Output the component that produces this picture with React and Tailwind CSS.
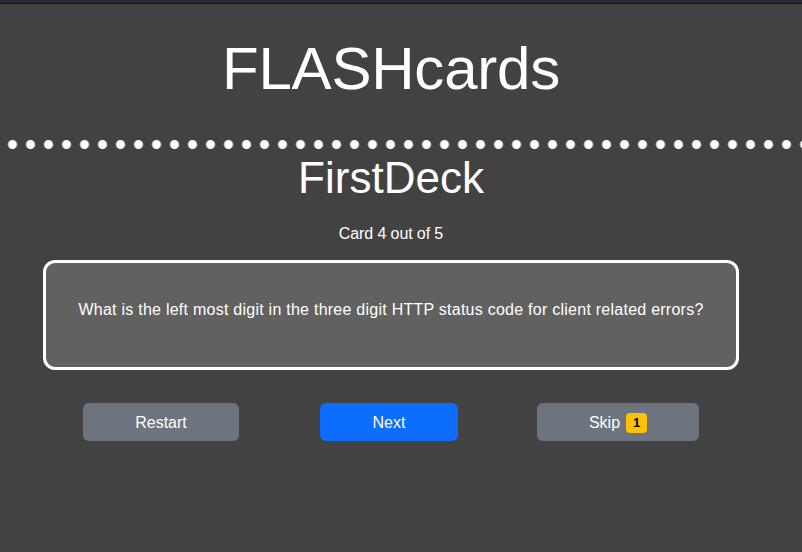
export default function App() {
  return (
    <div className="min-h-[552px] w-full overflow-hidden bg-[#424242] text-white font-['Liberation_Sans',Arial,sans-serif]">
      <div className="h-[3px] bg-[#2c2b34]" />
      <div className="h-px bg-[#111111]" />
      <div className="mx-0 mt-[35px] w-[696px] ml-[43px] text-center">
        <h1 className="text-[60px] leading-[60px] font-normal tracking-[-0.2px]">FLASHcards</h1>
      </div>
      <div className="mt-[41px] h-[9px] w-full bg-[radial-gradient(circle,#ffffff_4.2px,transparent_4.8px)] bg-[length:18px_9px] bg-[position:3.5px_0]" />
      <div className="ml-[43px] w-[696px] text-center">
        <h2 className="mt-[7px] text-[44px] leading-[44px] font-normal">FirstDeck</h2>
        <p className="mt-[22px] text-[16px] leading-[24px] tracking-[-0.1px]">Card 4 out of 5</p>
        <div className="mt-[14px] h-[110px] rounded-[12px] border-[3px] border-white bg-[#616161] px-2 pt-[35px]">
          <p className="text-[16px] leading-[24px] tracking-[0.25px]">
            What is the left most digit in the three digit HTTP status code for client related errors?
          </p>
        </div>
      </div>
      <div className="mt-[33px] ml-[47px] grid w-[684px] grid-cols-3">
        <div className="flex justify-center">
          <button className="flex h-[38px] w-[156px] items-center justify-center rounded-[6px] bg-[#6c757d] pt-px text-[16px] text-white">
            Restart
          </button>
        </div>
        <div className="flex justify-center">
          <button className="flex h-[38px] w-[138px] items-center justify-center rounded-[6px] bg-[#0d6efd] pt-px text-[16px] text-white">
            Next
          </button>
        </div>
        <div className="flex justify-center">
          <button className="ml-[2px] flex h-[38px] w-[162px] items-center justify-center gap-[6px] rounded-[6px] bg-[#6c757d] pt-px text-[16px] text-white">
            <span>Skip</span>
            <span className="flex h-[20px] w-[21px] items-center justify-center rounded-[4px] bg-[#ffc107] text-[13px] font-bold text-black">1</span>
          </button>
        </div>
      </div>
    </div>
  );
}
